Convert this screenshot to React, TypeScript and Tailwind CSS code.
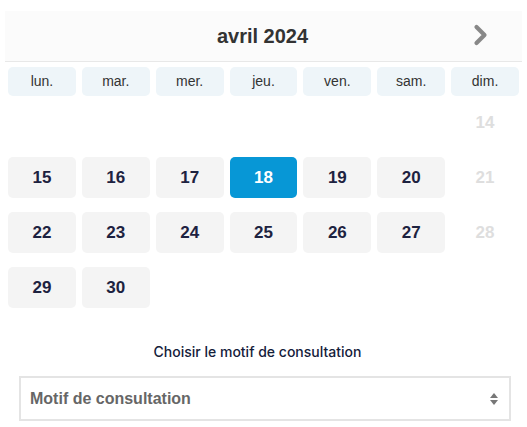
import React from "react";

const days = ["lun.", "mar.", "mer.", "jeu.", "ven.", "sam.", "dim."];

type Cell = { n: number | null; state: "empty" | "off" | "on" | "sel" };

const rows: Cell[][] = [
  [
    { n: null, state: "empty" },
    { n: null, state: "empty" },
    { n: null, state: "empty" },
    { n: null, state: "empty" },
    { n: null, state: "empty" },
    { n: null, state: "empty" },
    { n: 14, state: "off" },
  ],
  [
    { n: 15, state: "on" },
    { n: 16, state: "on" },
    { n: 17, state: "on" },
    { n: 18, state: "sel" },
    { n: 19, state: "on" },
    { n: 20, state: "on" },
    { n: 21, state: "off" },
  ],
  [
    { n: 22, state: "on" },
    { n: 23, state: "on" },
    { n: 24, state: "on" },
    { n: 25, state: "on" },
    { n: 26, state: "on" },
    { n: 27, state: "on" },
    { n: 28, state: "off" },
  ],
  [
    { n: 29, state: "on" },
    { n: 30, state: "on" },
    { n: null, state: "empty" },
    { n: null, state: "empty" },
    { n: null, state: "empty" },
    { n: null, state: "empty" },
    { n: null, state: "empty" },
  ],
];

function DayCell({ c }: { c: Cell }) {
  if (c.state === "empty") return <div className="h-[41px]" />;
  if (c.state === "off")
    return (
      <div className="h-[41px] flex items-center justify-center text-[17px] font-bold text-[#dedede]">
        {c.n}
      </div>
    );
  if (c.state === "sel")
    return (
      <div className="h-[41px] flex items-center justify-center rounded-[5px] bg-[#0797d6] text-[17px] font-bold text-white">
        {c.n}
      </div>
    );
  return (
    <div className="h-[41px] flex items-center justify-center rounded-[5px] bg-[#f4f4f4] text-[17px] font-bold text-[#1d2240]">
      {c.n}
    </div>
  );
}

export default function App() {
  return (
    <div
      className="w-[527px] h-[427px] bg-white pt-[11px] pl-[5px] pr-[5px]"
      style={{ fontFamily: '"Liberation Sans", Arial, sans-serif' }}
    >
      <div className="h-[51px] bg-[#fbfbfb] border-b border-[#e8e8e8] relative flex items-center justify-center">
        <span className="text-[20px] font-bold text-[#333333] mr-[2px]">avril 2024</span>
        <svg
          className="absolute right-[34px] top-[13px]"
          width="15"
          height="22"
          viewBox="0 0 15 22"
        >
          <path
            d="M3.5 3 L11.5 11 L3.5 19"
            fill="none"
            stroke="#888888"
            strokeWidth="4.2"
            strokeLinecap="round"
            strokeLinejoin="round"
          />
        </svg>
      </div>

      <div className="px-[3px] pt-[5px]">
        <div className="grid grid-cols-7 gap-x-[6px]">
          {days.map((d) => (
            <div
              key={d}
              className="h-[29px] flex items-center justify-center rounded-[5px] bg-[#eef5f9] text-[14px] text-[#333333]"
            >
              {d}
            </div>
          ))}
        </div>

        <div className="mt-[6px] flex flex-col gap-y-[14px]">
          {rows.map((r, i) => (
            <div key={i} className="grid grid-cols-7 gap-x-[6px]">
              {r.map((c, j) => (
                <DayCell key={j} c={c} />
              ))}
            </div>
          ))}
        </div>
      </div>

      <div className="mt-[33px] flex justify-center">
        <span
          className="text-[14px] font-medium text-[#14203a] mr-[12px]"
          style={{ fontFamily: '"Inter", "Noto Sans", sans-serif' }}
        >
          Choisir le motif de consultation
        </span>
      </div>

      <div className="mt-[14px] ml-[14px] w-[492px] h-[45px] border-2 border-[#e4e4e4] flex items-center justify-between pl-[9px] pr-[10px]">
        <span className="text-[16px] font-bold text-[#666666]">Motif de consultation</span>
        <svg width="10" height="14" viewBox="0 0 10 14">
          <path d="M5 1 L9 6 L1 6 Z" fill="#777777" />
          <path d="M5 13 L9 8 L1 8 Z" fill="#777777" />
        </svg>
      </div>
    </div>
  );
}
